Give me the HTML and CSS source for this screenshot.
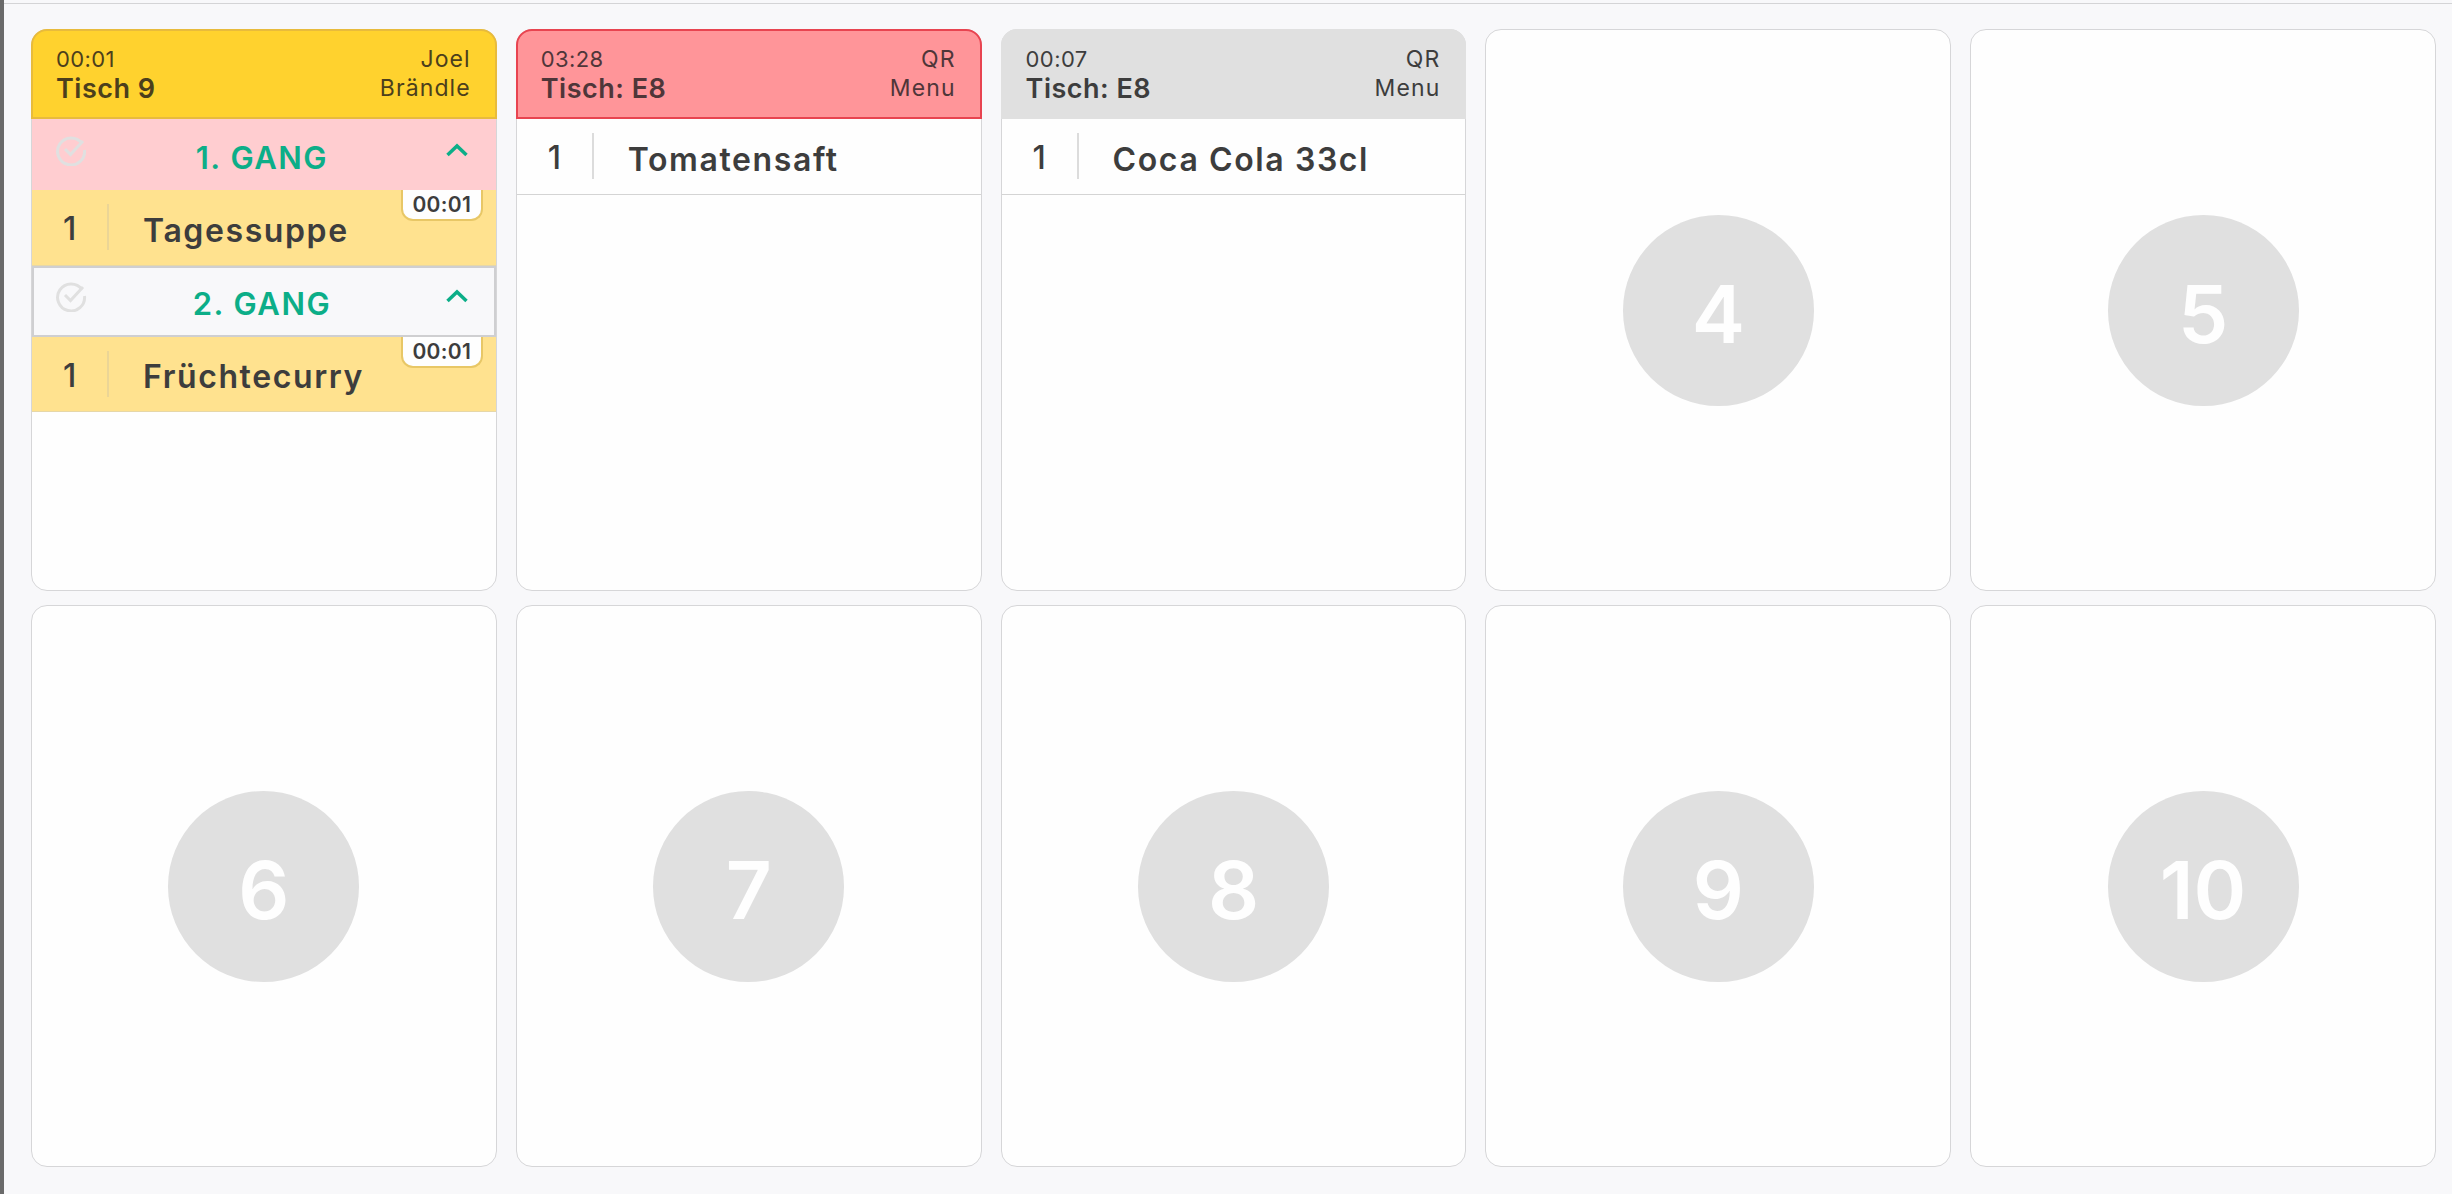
FILE: index.html
```html
<!DOCTYPE html>
<html lang="de">
<head>
    <meta charset="UTF-8">
    <title>Küche - Bestellungen</title>
    <link rel="stylesheet" href="styles.css">
</head>
<body>
    <div class="screen">
        <div class="slots">
            <!-- Slot 1 -->
            <div class="slot">
                <div class="slot-head head-yellow">
                    <div class="head-left">
                        <span class="head-time">00:01</span>
                        <span class="head-table">Tisch 9</span>
                    </div>
                    <div class="head-right">
                        <span>Joel</span>
                        <span>Brändle</span>
                    </div>
                </div>
                <div class="course course-pink">
                    <svg class="course-check" viewBox="0 0 32 32"><path d="M27 9.5A13.5 13.5 0 1 0 29.5 16"/><path d="M10 15l5.5 5.5L28 7"/></svg>
                    <span class="course-name">1. GANG</span>
                    <svg class="course-toggle" viewBox="0 0 24 14"><path d="M2.5 12L12 3l9.5 9"/></svg>
                </div>
                <div class="item item-yellow">
                    <span class="item-qty">1</span>
                    <span class="item-name">Tagessuppe</span>
                    <span class="item-timer">00:01</span>
                </div>
                <div class="course course-grey">
                    <svg class="course-check" viewBox="0 0 32 32"><path d="M27 9.5A13.5 13.5 0 1 0 29.5 16"/><path d="M10 15l5.5 5.5L28 7"/></svg>
                    <span class="course-name">2. GANG</span>
                    <svg class="course-toggle" viewBox="0 0 24 14"><path d="M2.5 12L12 3l9.5 9"/></svg>
                </div>
                <div class="item item-yellow">
                    <span class="item-qty">1</span>
                    <span class="item-name">Früchtecurry</span>
                    <span class="item-timer">00:01</span>
                </div>
            </div>

            <!-- Slot 2 -->
            <div class="slot">
                <div class="slot-head head-red">
                    <div class="head-left">
                        <span class="head-time">03:28</span>
                        <span class="head-table">Tisch: E8</span>
                    </div>
                    <div class="head-right">
                        <span>QR</span>
                        <span>Menu</span>
                    </div>
                </div>
                <div class="item">
                    <span class="item-qty">1</span>
                    <span class="item-name">Tomatensaft</span>
                </div>
            </div>

            <!-- Slot 3 -->
            <div class="slot">
                <div class="slot-head head-grey">
                    <div class="head-left">
                        <span class="head-time">00:07</span>
                        <span class="head-table">Tisch: E8</span>
                    </div>
                    <div class="head-right">
                        <span>QR</span>
                        <span>Menu</span>
                    </div>
                </div>
                <div class="item">
                    <span class="item-qty">1</span>
                    <span class="item-name">Coca Cola 33cl</span>
                </div>
            </div>

            <!-- Leere Slots -->
            <div class="slot slot-empty"><span class="slot-number">4</span></div>
            <div class="slot slot-empty"><span class="slot-number">5</span></div>
            <div class="slot slot-empty"><span class="slot-number">6</span></div>
            <div class="slot slot-empty"><span class="slot-number">7</span></div>
            <div class="slot slot-empty"><span class="slot-number">8</span></div>
            <div class="slot slot-empty"><span class="slot-number">9</span></div>
            <div class="slot slot-empty"><span class="slot-number">10</span></div>
        </div>
    </div>
</body>
</html>
```

FILE: styles.css
```css
html, body {
    height: 100%;
}

body {
    margin: 0;
    background-color: #f8f8fa;
    font-family: 'Inter', 'Noto Sans', sans-serif;
    color: #3d3d3d;
    overflow: hidden;
}

.screen {
    box-sizing: border-box;
    height: 1194px;
    padding-top: 3px;
    border-left: 4px solid #6a6a6a;
}

.slots {
    box-sizing: border-box;
    height: 100%;
    padding: 25px 16px 27px 27px;
    border-top: 1px solid #d4d4d6;
    display: grid;
    grid-template-columns: repeat(5, 1fr);
    grid-template-rows: repeat(2, 1fr);
    column-gap: 19px;
    row-gap: 14px;
}

.slot {
    box-sizing: border-box;
    min-width: 0;
    background-color: #fefefe;
    border: 1px solid #d6d6d8;
    border-radius: 16px;
}

.slot-empty {
    display: flex;
    align-items: center;
    justify-content: center;
}

.slot-number {
    box-sizing: border-box;
    width: 191px;
    height: 191px;
    padding-top: 6px;
    border-radius: 50%;
    background-color: #e0e0e0;
    color: #fefefe;
    font-size: 80px;
    font-weight: 600;
    display: flex;
    align-items: center;
    justify-content: center;
}

/* Kopf der Bestellung */
.slot-head {
    box-sizing: border-box;
    height: 90px;
    margin: -1px -1px 0;
    padding: 14px 24px 0 23px;
    border: 2px solid transparent;
    border-radius: 16px 16px 0 0;
    display: flex;
    justify-content: space-between;
}

.head-yellow {
    background-color: #ffd22e;
    border-color: #e8bb3c;
    color: #4c3f1c;
}

.head-red {
    background-color: #ff9599;
    border-color: #e84450;
    color: #4f3639;
}

.head-grey {
    background-color: #e0e0e0;
    border-color: #e0e0e0;
}

.head-left,
.head-right {
    display: flex;
    flex-direction: column;
    font-size: 23px;
    line-height: 29px;
    letter-spacing: 1.1px;
}

.head-right {
    align-items: flex-end;
}

.head-time {
    font-size: 22px;
    letter-spacing: 0.4px;
}

.head-table {
    font-size: 27px;
    font-weight: 600;
    letter-spacing: 0.5px;
}

/* Gang */
.course {
    box-sizing: border-box;
    height: 71px;
    padding: 0 27px 0 23px;
    display: grid;
    grid-template-columns: 1fr auto 1fr;
    align-items: center;
}

.course-pink {
    background-color: #ffcdd0;
}

.course-grey {
    padding: 0 25px 0 21px;
    background-color: #f8f8fa;
    border: 2px solid #cfcfd1;
}

.course-check {
    width: 32px;
    height: 32px;
    margin-top: -10px;
    fill: none;
    stroke: #e0e0e0;
    stroke-width: 3;
}

.course-name {
    padding-top: 5px;
    color: #0cae88;
    font-size: 31px;
    font-weight: 600;
    letter-spacing: 1.5px;
}

.course-toggle {
    justify-self: end;
    width: 24px;
    height: 14px;
    margin-top: -10px;
    fill: none;
    stroke: #0cae88;
    stroke-width: 3.5;
}

/* Position */
.item {
    position: relative;
    box-sizing: border-box;
    height: 75.5px;
    padding-right: 24px;
    border-bottom: 1px solid #d4d4d4;
    display: flex;
    align-items: center;
}

.item-yellow {
    background-color: #ffe28f;
    border-bottom-color: #e6d7a8;
}

.item-qty {
    box-sizing: border-box;
    width: 77px;
    padding: 4px 0 0 31px;
    border-right: 2px solid #dcdcdc;
    font-size: 32px;
    font-weight: 500;
    line-height: 42px;
}

.item-yellow .item-qty {
    border-right-color: #ebd596;
}

.item-name {
    margin-left: 34px;
    padding-top: 6px;
    font-size: 32px;
    font-weight: 600;
    letter-spacing: 1.6px;
}

.item-timer {
    position: absolute;
    top: 0;
    right: 13px;
    box-sizing: border-box;
    width: 82px;
    height: 31px;
    background-color: #fefefe;
    border: 2px solid #e8c766;
    border-top: none;
    border-radius: 0 0 12px 12px;
    font-size: 21px;
    font-weight: 600;
    letter-spacing: 0.3px;
    line-height: 30px;
    text-align: center;
}
```
